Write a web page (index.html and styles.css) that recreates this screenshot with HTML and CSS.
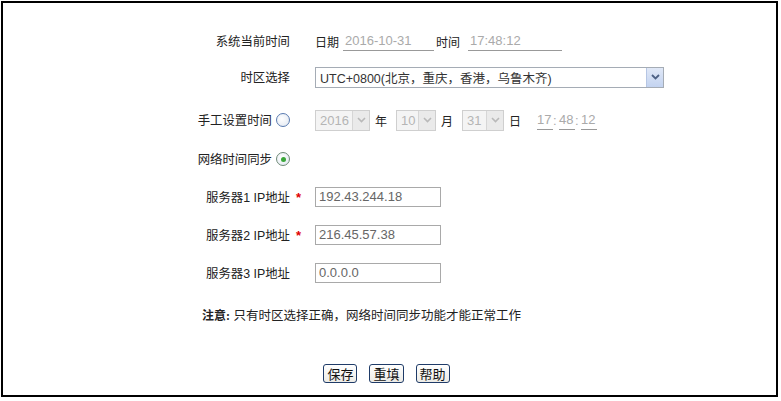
FILE: index.html
```html
<!DOCTYPE html>
<html lang="zh-CN">
<head>
    <meta charset="UTF-8">
    <title>时间设置</title>
    <link rel="stylesheet" href="styles.css">
</head>
<body>
    <!-- Riquadro principale con le impostazioni di sistema -->
    <div class="frame">
        <div class="row row-now">
            <div class="label">系统当前时间</div>
            <div class="mark"></div>
            <div class="field">
                <span class="word">日期</span>
                <span class="line-input date">2016-10-31</span>
                <span class="word">时间</span>
                <span class="line-input clock">17:48:12</span>
            </div>
        </div>

        <div class="row row-zone">
            <div class="label">时区选择</div>
            <div class="mark"></div>
            <div class="field">
                <div class="select zone">
                    <span class="select-text">UTC+0800(北京，重庆，香港，乌鲁木齐)</span>
                    <span class="arrow"><svg width="9" height="6" viewBox="0 0 9 6"><path d="M1 1 L4.5 4.5 L8 1" fill="none" stroke="#4d6185" stroke-width="1.8"/></svg></span>
                </div>
            </div>
        </div>

        <div class="row row-manual">
            <div class="label">手工设置时间 <span class="radio"></span></div>
            <div class="mark"></div>
            <div class="field">
                <div class="select off year">
                    <span class="select-text">2016</span>
                    <span class="arrow"><svg width="9" height="6" viewBox="0 0 9 6"><path d="M1 1 L4.5 4.5 L8 1" fill="none" stroke="#b9b9b9" stroke-width="1.6"/></svg></span>
                </div>
                <span class="unit">年</span>
                <div class="select off month">
                    <span class="select-text">10</span>
                    <span class="arrow"><svg width="9" height="6" viewBox="0 0 9 6"><path d="M1 1 L4.5 4.5 L8 1" fill="none" stroke="#b9b9b9" stroke-width="1.6"/></svg></span>
                </div>
                <span class="unit">月</span>
                <div class="select off day">
                    <span class="select-text">31</span>
                    <span class="arrow"><svg width="9" height="6" viewBox="0 0 9 6"><path d="M1 1 L4.5 4.5 L8 1" fill="none" stroke="#b9b9b9" stroke-width="1.6"/></svg></span>
                </div>
                <span class="unit">日</span>
                <span class="line-input tiny">17</span><span class="colon">:</span>
                <span class="line-input tiny">48</span><span class="colon">:</span>
                <span class="line-input tiny">12</span>
            </div>
        </div>

        <div class="row row-sync">
            <div class="label">网络时间同步 <span class="radio on"></span></div>
            <div class="mark"></div>
            <div class="field"></div>
        </div>

        <div class="row row-ip">
            <div class="label">服务器1 IP地址</div>
            <div class="mark">*</div>
            <div class="field"><span class="box-input">192.43.244.18</span></div>
        </div>

        <div class="row row-ip">
            <div class="label">服务器2 IP地址</div>
            <div class="mark">*</div>
            <div class="field"><span class="box-input">216.45.57.38</span></div>
        </div>

        <div class="row row-ip">
            <div class="label">服务器3 IP地址</div>
            <div class="mark"></div>
            <div class="field"><span class="box-input">0.0.0.0</span></div>
        </div>

        <div class="note"><b>注意:</b> 只有时区选择正确，网络时间同步功能才能正常工作</div>

        <div class="buttons">
            <button type="button">保存</button>
            <button type="button">重填</button>
            <button type="button">帮助</button>
        </div>
    </div>
</body>
</html>
```

FILE: styles.css
```css
/* Base */
body {
    margin: 0;
    font-family: "Liberation Sans", Arial, "Noto Sans CJK SC", sans-serif;
    font-size: 12px;
    color: #222;
    background: #fff;
}

/* Riquadro esterno */
.frame {
    box-sizing: border-box;
    width: 777px;
    height: 396px;
    margin: 1px;
    border: 2px solid #000;
    padding-top: 20px;
}

/* Righe del modulo */
.row {
    display: flex;
    align-items: center;
    height: 38px;
}

.row-now { height: 36px; }
.row-zone { height: 36px; }
.row-manual { height: 50px; }
.row-sync { height: 28px; margin-bottom: 5px; }

.label {
    width: 287px;
    font-size: 12.4px;
    text-align: right;
    display: flex;
    align-items: center;
    justify-content: flex-end;
    white-space: nowrap;
}

.mark {
    width: 25px;
    box-sizing: border-box;
    padding-left: 6px;
    color: #e00000;
    font-weight: bold;
    font-size: 13px;
}

.field {
    display: flex;
    align-items: center;
}

.word {
    margin-right: 4px;
}

/* Campi con sottolineatura */
.line-input {
    display: inline-block;
    border-bottom: 1px solid #999;
    color: #aaa;
    font-size: 13px;
    line-height: 18px;
    padding-left: 2px;
    box-sizing: border-box;
}

.line-input.date { width: 91px; margin-right: 2px; }
.line-input.clock { width: 94px; margin-left: 4px; }
.line-input.tiny { width: 16px; padding-left: 0; text-align: left; }

.colon {
    color: #aaa;
    font-size: 13px;
    width: 6px;
    text-align: left;
}

/* Menu a tendina disegnati */
.select {
    display: flex;
    align-items: center;
    justify-content: space-between;
    height: 21px;
    box-sizing: border-box;
    border: 1px solid #a5acb5;
    background: #fff;
}

.select-text {
    padding-left: 4px;
    font-size: 12.5px;
    color: #333;
}

.select .arrow {
    width: 16px;
    height: 19px;
    display: flex;
    align-items: center;
    justify-content: center;
    background: linear-gradient(#e0e8f7, #c3d3f0);
    border-left: 1px solid #b6c6e4;
}

.select.zone { width: 349px; }

.select.off {
    border-color: #cfcfcf;
    background: #f4f4f4;
}

.select.off .select-text { color: #b5b5b5; font-size: 13px; }

.select.off .arrow {
    background: #eaeaea;
    border-left: 1px solid #d6d6d6;
}

.select.year { width: 55px; }
.select.month { width: 40px; }
.select.day { width: 42px; }

.unit {
    margin: 0 9px 0 5px;
}

.unit + .line-input { margin-left: 7px; }

/* Radio disegnati */
.radio {
    display: inline-block;
    width: 14px;
    height: 14px;
    box-sizing: border-box;
    border-radius: 50%;
    border: 1px solid #5a7bb0;
    background: radial-gradient(circle at 40% 40%, #fff, #dfe6f0);
    margin-left: 4px;
    position: relative;
}

.radio.on {
    border-color: #6e8a76;
}

.radio.on::after {
    content: "";
    position: absolute;
    left: 3.5px;
    top: 3.5px;
    width: 5px;
    height: 5px;
    border-radius: 50%;
    background: #3aa63a;
}

/* Caselle per gli indirizzi IP */
.box-input {
    display: inline-block;
    width: 126px;
    height: 20px;
    box-sizing: border-box;
    border: 1px solid #a9a9a9;
    padding-left: 3px;
    line-height: 18px;
    font-size: 13px;
    color: #666;
}

/* Nota */
.note {
    padding-left: 199px;
    margin-top: 14px;
    height: 20px;
    line-height: 20px;
    font-size: 12.5px;
}

.note b {
    font-family: "Liberation Serif", "Noto Sans CJK SC", serif;
    font-size: 12px;
}

/* Pulsanti */
.buttons {
    display: flex;
    justify-content: center;
    gap: 12px;
    padding-right: 6px;
    margin-top: 38px;
}

button {
    font-family: "Noto Sans CJK SC", sans-serif;
    font-size: 13px;
    height: 19px;
    line-height: 15px;
    padding: 0 3px;
    border: 1px solid #1f3b68;
    border-radius: 3px;
    background: linear-gradient(#ffffff, #ecebe6);
    color: #111;
    cursor: pointer;
}
```
